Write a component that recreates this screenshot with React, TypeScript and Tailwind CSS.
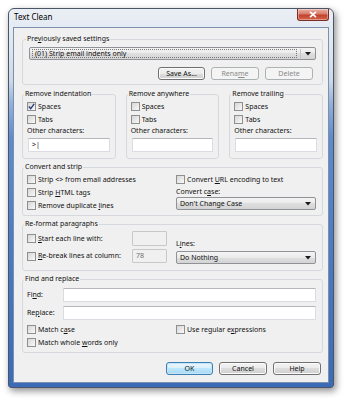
import React from 'react';

type Kids = { children?: React.ReactNode };

function Arrow() {
  return (
    <svg width="6" height="4" viewBox="0 0 6 4" className="shrink-0">
      <path d="M0 0 L6 0 L3 3.5 Z" fill="#1a1a1a" />
    </svg>
  );
}

function Check({ checked, children }: Kids & { checked?: boolean }) {
  return (
    <div className="flex items-center h-[13px]">
      <span className="w-[9px] h-[9px] shrink-0 border border-[#8e8f8f] bg-[linear-gradient(135deg,#d6d6d6,#f9f9f9)] flex items-center justify-center mr-[2px]">
        {checked && (
          <svg width="7" height="7" viewBox="0 0 7 7">
            <path d="M0.8 3.6 L2.7 5.6 L6.2 0.9" fill="none" stroke="#2b3f78" strokeWidth="1.4" />
          </svg>
        )}
      </span>
      <span className="whitespace-nowrap">{children}</span>
    </div>
  );
}

function Group({ title, className = '', children }: Kids & { title: React.ReactNode; className?: string }) {
  return (
    <fieldset className={`border border-[#d5d9dd] rounded-[3px] min-w-0 ${className}`}>
      <legend className="ml-[-3px] px-[1px] leading-[10px] whitespace-nowrap">{title}</legend>
      {children}
    </fieldset>
  );
}

function Combo({ text, className = '' }: { text: string; className?: string }) {
  return (
    <div className={`h-[13px] flex items-center rounded-[2px] border border-[#8f9296] bg-[linear-gradient(#f4f4f4,#eaeaea_50%,#dedede_50%,#d4d4d4)] pl-[3px] pr-[4px] ${className}`}>
      <span className="flex-1 whitespace-nowrap">{text}</span>
      <Arrow />
    </div>
  );
}

function Btn({ children, disabled, primary, className = '' }: Kids & { disabled?: boolean; primary?: boolean; className?: string }) {
  const look = disabled
    ? 'border-[#adb2b5] bg-[#f4f4f4] text-[#8a8a8a]'
    : primary
      ? 'border-[#3c7fb1] bg-[linear-gradient(#eaf6fd,#d9f0fc_50%,#bee6fd_50%,#a7d9f5)] shadow-[inset_0_0_0_1px_#c3e6fb]'
      : 'border-[#707070] bg-[linear-gradient(#f2f2f2,#ebebeb_50%,#dddddd_50%,#cfcfcf)] shadow-[inset_0_0_0_1px_#fcfcfc]';
  return (
    <div className={`h-[13px] flex items-center justify-center rounded-[3px] border ${look} ${className}`}>
      {children}
    </div>
  );
}

function Field({ value, className = '', disabled }: { value?: React.ReactNode; className?: string; disabled?: boolean }) {
  return (
    <div
      className={`flex items-center pl-[3px] border rounded-[1px] ${
        disabled ? 'bg-[#f0f0f0] border-[#c8c8c8] text-[#6d6d6d]' : 'bg-white border-[#d9dce1] border-t-[#b4b6bc]'
      } ${className}`}
    >
      {value}
    </div>
  );
}

function CloseButton() {
  return (
    <div className="w-[32px] h-[12px] rounded-b-[3px] border border-t-0 border-[#7a2e26] bg-[linear-gradient(#eab2a6,#d77b69_45%,#c2412c_55%,#d3664c)] flex items-center justify-center shadow-[inset_0_0_0_1px_rgba(255,255,255,0.35)]">
      <svg width="8" height="7" viewBox="0 0 8 7">
        <path d="M1 0.8 L7 6.2 M7 0.8 L1 6.2" stroke="#ffffff" strokeWidth="1.7" />
      </svg>
    </div>
  );
}

export default function App() {
  return (
    <div className="w-[346px] h-[400px] bg-white pt-[8px] pl-[8px] font-['Noto_Sans','Liberation_Sans',sans-serif] text-[7px] leading-[10px] text-[#111]">
      {/* Window frame */}
      <div className="w-[326px] h-[380px] flex flex-col px-[4px] pb-[4px] rounded-t-[6px] rounded-b-[3px] border border-[#4a5566] bg-[linear-gradient(180deg,#eaeff5_0%,#dfe6ef_10%,#cdd9e9_19%,#93b0da_25%,#5f8bcd_34%,#4a7ac3_65%,#3b6bb7_100%)] shadow-[2px_3px_7px_rgba(0,0,0,0.45)]">
        <div className="h-[18px] flex items-start justify-between shrink-0">
          <span className="pt-[3px] pl-[1px] text-[8px] leading-[10px] text-black">Text Clean</span>
          <CloseButton />
        </div>

        {/* Client area */}
        <div className="flex-1 bg-[#f0f0f0] border border-[#7a90ad] pl-[8px] pr-[5px] pt-[6px] flex flex-col">
          <Group title={<>Pre<u>v</u>iously saved settings</>} className="px-[6px] pt-[3px] pb-[4px]">
            <div className="h-[13px] flex items-center rounded-[2px] border border-[#8f9296] bg-[linear-gradient(#f4f4f4,#eaeaea_50%,#dedede_50%,#d4d4d4)] pl-[2px] pr-[4px]">
              <span className="flex-1 h-[9px] flex items-center border border-dotted border-[#777] pl-[2px] mr-[3px] whitespace-nowrap">
                (01) Strip email indents only
              </span>
              <span className="w-px h-[9px] bg-[#c4c4c4] mr-[4px]" />
              <Arrow />
            </div>
            <div className="flex justify-end gap-[6px] mt-[7px] pr-[3px]">
              <Btn className="w-[47px]">Save As...</Btn>
              <Btn disabled className="w-[48px]">Rena<u>m</u>e</Btn>
              <Btn disabled className="w-[48px]">Delete</Btn>
            </div>
          </Group>

          <div className="grid grid-cols-3 gap-[10px] mt-[4px]">
            {['Remove indentation', 'Remove anywhere', 'Remove trailing'].map((t, i) => (
              <Group key={t} title={t} className="pl-[4px] pr-[5px] pt-[1px] pb-[6px]">
                <Check checked={i === 0}>Spaces</Check>
                <Check>Tabs</Check>
                <div className="h-[10px] whitespace-nowrap">Other characters:</div>
                <Field className="h-[14px] mt-[2px] ml-[1px]" value={i === 0 ? <span>&gt;|</span> : null} />
              </Group>
            ))}
          </div>

          <Group title="Convert and strip" className="mt-[3px] pl-[4px] pr-[6px] pt-[1px] pb-[3px]">
            <div className="flex">
              <div className="w-[149px] shrink-0">
                <Check>Strip &lt;&gt; from email addresses</Check>
                <Check>Strip <u>H</u>TML tags</Check>
                <Check>Remove duplicate <u>l</u>ines</Check>
              </div>
              <div className="flex-1">
                <Check>Convert <u>U</u>RL encoding to text</Check>
                <div className="h-[10px] mt-[1px]">Convert c<u>a</u>se:</div>
                <Combo text="Don't Change Case" />
              </div>
            </div>
          </Group>

          <Group title="Re-format paragraphs" className="mt-[3px] pl-[4px] pr-[6px] pt-[2px] pb-[6px]">
            <div className="flex">
              <div className="w-[149px] shrink-0">
                <div className="flex items-center h-[15px]">
                  <div className="w-[105px]">
                    <Check><u>S</u>tart each line with:</Check>
                  </div>
                  <Field disabled className="w-[35px] h-[15px]" />
                </div>
                <div className="flex items-center h-[14px] mt-[3px]">
                  <div className="w-[105px]">
                    <Check><u>R</u>e-break lines at column:</Check>
                  </div>
                  <Field disabled className="w-[35px] h-[14px]" value="78" />
                </div>
              </div>
              <div className="flex-1">
                <div className="h-[10px] mt-[8px]">L<u>i</u>nes:</div>
                <Combo text="Do Nothing" className="mt-[2px]" />
              </div>
            </div>
          </Group>

          <Group title="Find and replace" className="mt-[3px] pl-[4px] pr-[6px] pt-[4px] pb-[3px]">
            <div className="flex items-center h-[14px]">
              <span className="w-[36px] shrink-0">Fi<u>n</u>d:</span>
              <Field className="flex-1 h-[14px]" />
            </div>
            <div className="flex items-center h-[14px] mt-[4px]">
              <span className="w-[36px] shrink-0">Re<u>p</u>lace:</span>
              <Field className="flex-1 h-[14px]" />
            </div>
            <div className="flex mt-[3px]">
              <div className="w-[149px] shrink-0">
                <Check>Match c<u>a</u>se</Check>
                <Check>Match whole <u>w</u>ords only</Check>
              </div>
              <div className="flex-1">
                <Check>Use regular e<u>x</u>pressions</Check>
              </div>
            </div>
          </Group>

          <div className="flex justify-end gap-[6px] mt-[9px] pr-[2px]">
            <Btn primary className="w-[47px]">OK</Btn>
            <Btn className="w-[48px]">Cancel</Btn>
            <Btn className="w-[48px]">Help</Btn>
          </div>
        </div>
      </div>
    </div>
  );
}
